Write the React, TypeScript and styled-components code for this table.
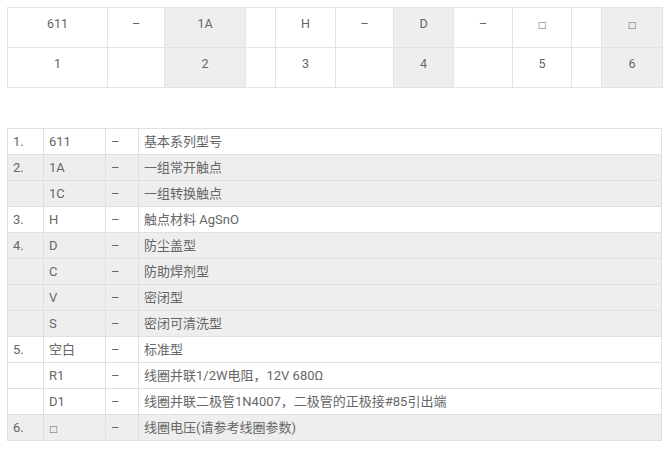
import React from 'react';
import styled, { createGlobalStyle } from 'styled-components';

const GlobalStyle = createGlobalStyle`
  body {
    margin: 0;
    padding: 7px;
    background: #fff;
    font-family: Roboto, 'Noto Sans CJK SC', sans-serif;
    color: #666;
  }
`;

const Page = styled.div`
  display: flex;
  flex-direction: column;
  gap: 40px;
`;

const CodeTable = styled.table`
  border-collapse: collapse;
  table-layout: fixed;
  width: 655px;
`;

const CodeCell = styled.td<{ $shade?: boolean }>`
  height: 40px;
  box-sizing: border-box;
  padding: 8px 0 0;
  vertical-align: top;
  text-align: center;
  font-size: 12.5px;
  line-height: 16px;
  border: 1px solid #e3e3e3;
  background: ${(p) => (p.$shade ? '#eeeeee' : '#fff')};
`;

const Box = styled.span`
  font-family: 'DejaVu Sans', sans-serif;
  font-size: 9px;
`;

const SpecTable = styled.table`
  border-collapse: collapse;
  table-layout: fixed;
  width: 654px;
`;

const SpecRow = styled.tr<{ $shade?: boolean }>`
  background: ${(p) => (p.$shade ? '#eeeeee' : '#fff')};
`;

const SpecCell = styled.td`
  height: 26px;
  box-sizing: border-box;
  padding: 1px 5px 0;
  font-size: 13px;
  line-height: 18px;
  text-align: left;
  border: 1px solid #e0e0e0;
  white-space: nowrap;
`;

const sq = <Box>□</Box>;

const codeCols = [100, 57, 81, 30, 60, 58, 60, 59, 59, 30, 61];
const codeTop: React.ReactNode[] = ['611', '–', '1A', '', 'H', '–', 'D', '–', sq, '', sq];
const codeBottom = ['1', '', '2', '', '3', '', '4', '', '5', '', '6'];
const shaded = [2, 6, 10];

const specCols = [36, 62, 33, 523];
const specRows: { n: string; code: React.ReactNode; text: string; shade: boolean }[] = [
  { n: '1.', code: '611', text: '基本系列型号', shade: false },
  { n: '2.', code: '1A', text: '一组常开触点', shade: true },
  { n: '', code: '1C', text: '一组转换触点', shade: true },
  { n: '3.', code: 'H', text: '触点材料 AgSnO', shade: false },
  { n: '4.', code: 'D', text: '防尘盖型', shade: true },
  { n: '', code: 'C', text: '防助焊剂型', shade: true },
  { n: '', code: 'V', text: '密闭型', shade: true },
  { n: '', code: 'S', text: '密闭可清洗型', shade: true },
  { n: '5.', code: '空白', text: '标准型', shade: false },
  { n: '', code: 'R1', text: '线圈并联1/2W电阻，12V 680Ω', shade: false },
  { n: '', code: 'D1', text: '线圈并联二极管1N4007，二极管的正极接#85引出端', shade: false },
  { n: '6.', code: sq, text: '线圈电压(请参考线圈参数)', shade: true },
];

export default function App() {
  return (
    <>
      <GlobalStyle />
      <Page>
        <CodeTable>
          <colgroup>
            {codeCols.map((w, i) => (
              <col key={i} style={{ width: w }} />
            ))}
          </colgroup>
          <tbody>
            <tr>
              {codeTop.map((c, i) => (
                <CodeCell key={i} $shade={shaded.includes(i)}>
                  {c}
                </CodeCell>
              ))}
            </tr>
            <tr>
              {codeBottom.map((c, i) => (
                <CodeCell key={i} $shade={shaded.includes(i)}>
                  {c}
                </CodeCell>
              ))}
            </tr>
          </tbody>
        </CodeTable>

        <SpecTable>
          <colgroup>
            {specCols.map((w, i) => (
              <col key={i} style={{ width: w }} />
            ))}
          </colgroup>
          <tbody>
            {specRows.map((r, i) => (
              <SpecRow key={i} $shade={r.shade}>
                <SpecCell>{r.n}</SpecCell>
                <SpecCell>{r.code}</SpecCell>
                <SpecCell>–</SpecCell>
                <SpecCell>{r.text}</SpecCell>
              </SpecRow>
            ))}
          </tbody>
        </SpecTable>
      </Page>
    </>
  );
}
